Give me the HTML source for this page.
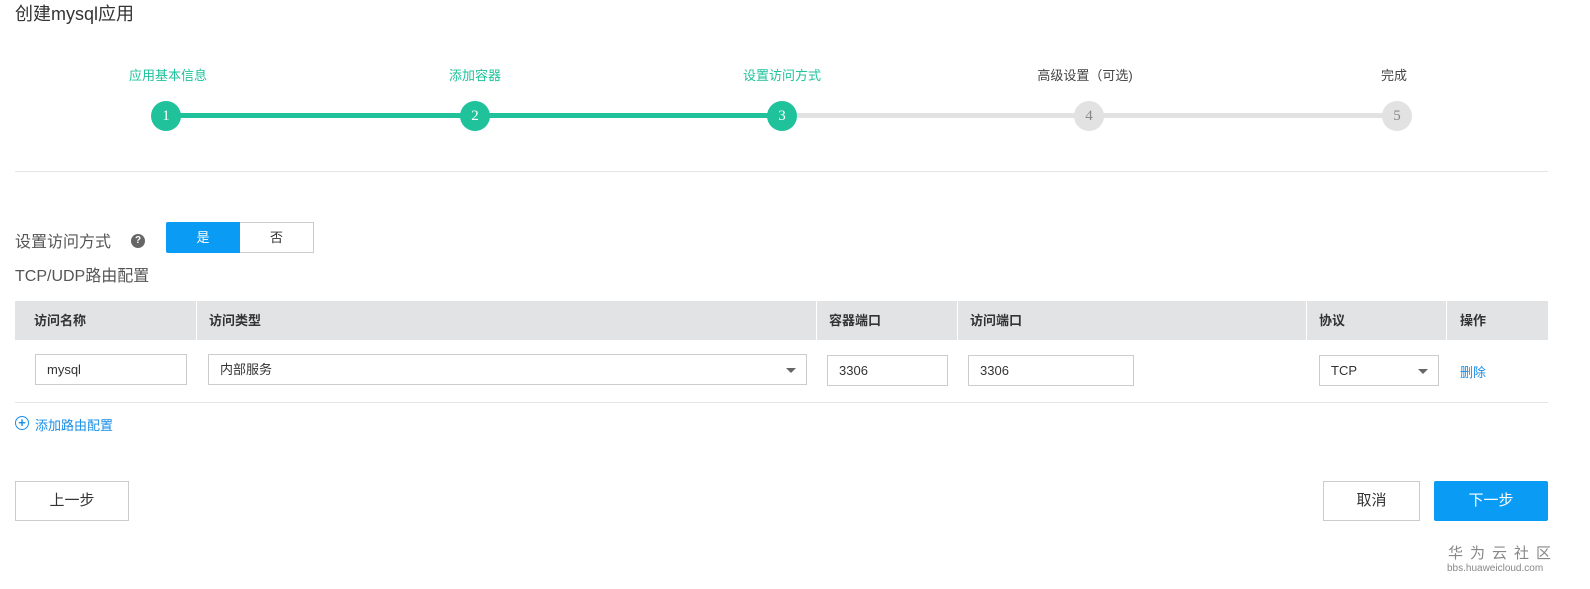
<!DOCTYPE html>
<html><head><meta charset="utf-8"><style>
*{margin:0;padding:0;box-sizing:border-box}
body{width:1590px;height:589px;background:#fff;font-family:"Liberation Sans","Noto Sans CJK SC",sans-serif;color:#333;position:relative;overflow:hidden}
.a{position:absolute}
.lbl{font-size:13px;top:65px;transform:translateX(-50%);white-space:nowrap}
.c{width:30px;height:30px;border-radius:50%;top:101px;transform:translateX(-50%);color:#fff;font-family:"Liberation Serif",serif;font-size:15px;text-align:center;line-height:30px}
.th{top:301px;height:39px;background:#e1e3e5;font-size:13px;font-weight:bold;line-height:39px;padding-left:19px;border-left:1px solid #fff}
.in{height:31px;border:1px solid #ccc;font-size:13px;line-height:29px;padding-left:11px;background:#fff}
.arr{position:absolute;right:10px;top:13px;border-left:5px solid transparent;border-right:5px solid transparent;border-top:5px solid #666}
</style></head><body>
<div class="a" style="left:15px;top:0;font-size:18px">创建mysql应用</div>

<div class="a" style="left:166px;top:113px;width:616px;height:5px;background:#1fc29b"></div>
<div class="a" style="left:782px;top:113px;width:615px;height:5px;background:#e2e2e2"></div>
<div class="a lbl" style="left:168px;color:#1fc29b">应用基本信息</div>
<div class="a lbl" style="left:475px;color:#1fc29b">添加容器</div>
<div class="a lbl" style="left:782px;color:#1fc29b">设置访问方式</div>
<div class="a lbl" style="left:1085px;color:#444">高级设置（可选)</div>
<div class="a lbl" style="left:1394px;color:#444">完成</div>
<div class="a c" style="left:166px;background:#1fc29b">1</div>
<div class="a c" style="left:475px;background:#1fc29b">2</div>
<div class="a c" style="left:782px;background:#1fc29b">3</div>
<div class="a c" style="left:1089px;background:#e2e2e2;color:#888">4</div>
<div class="a c" style="left:1397px;background:#e2e2e2;color:#888">5</div>

<div class="a" style="left:15px;top:171px;width:1533px;height:1px;background:#e5e5e5"></div>

<div class="a" style="left:15px;top:228px;font-size:16px;color:#555">设置访问方式</div>
<div class="a" style="left:131px;top:234px;width:14px;height:14px;border-radius:50%;background:#666;color:#fff;font-size:10px;font-weight:bold;text-align:center;line-height:14px">?</div>
<div class="a" style="left:166px;top:222px;width:74px;height:31px;background:#0a9cf5;color:#fff;font-size:13px;text-align:center;line-height:31px;border-radius:2px 0 0 2px">是</div>
<div class="a" style="left:240px;top:222px;width:74px;height:31px;border:1px solid #ccc;border-left:none;font-size:13px;text-align:center;line-height:29px">否</div>
<div class="a" style="left:15px;top:262px;font-size:16px;color:#555">TCP/UDP路由配置</div>

<div class="a th" style="left:15px;width:181px;border-left:none">访问名称</div>
<div class="a th" style="left:196px;width:620px;padding-left:12px">访问类型</div>
<div class="a th" style="left:816px;width:141px;padding-left:12px">容器端口</div>
<div class="a th" style="left:957px;width:349px;padding-left:12px">访问端口</div>
<div class="a th" style="left:1306px;width:140px;padding-left:12px">协议</div>
<div class="a th" style="left:1446px;width:102px;padding-left:13px">操作</div>

<div class="a in" style="left:35px;top:354px;width:152px">mysql</div>
<div class="a in" style="left:208px;top:354px;width:599px">内部服务<span class="arr"></span></div>
<div class="a in" style="left:827px;top:355px;width:121px">3306</div>
<div class="a in" style="left:968px;top:355px;width:166px">3306</div>
<div class="a in" style="left:1319px;top:355px;width:120px">TCP<span class="arr"></span></div>
<div class="a" style="left:1460px;top:362px;font-size:13px;color:#1a8ee6">删除</div>
<div class="a" style="left:15px;top:402px;width:1533px;height:1px;background:#e5e5e5"></div>

<div class="a" style="left:15px;top:416px;width:14px;height:14px;border:1.5px solid #1a8ee6;border-radius:50%;color:#1a8ee6;font-size:13px;font-weight:bold;text-align:center;line-height:11px">+</div>
<div class="a" style="left:35px;top:415px;font-size:13px;color:#1a8ee6">添加路由配置</div>

<div class="a" style="left:15px;top:481px;width:114px;height:40px;border:1px solid #ccc;font-size:15px;text-align:center;line-height:38px">上一步</div>
<div class="a" style="left:1323px;top:481px;width:97px;height:40px;border:1px solid #ccc;font-size:15px;text-align:center;line-height:38px">取消</div>
<div class="a" style="left:1434px;top:481px;width:114px;height:40px;background:#0a9cf5;color:#fff;font-size:15px;text-align:center;line-height:40px;border-radius:2px">下一步</div>

<div class="a" style="left:1448px;top:542px;font-size:15px;color:#888;letter-spacing:7px">华为云社区</div>
<div class="a" style="left:1447px;top:563px;font-size:10px;color:#888">bbs.huaweicloud.com</div>
</body></html>
